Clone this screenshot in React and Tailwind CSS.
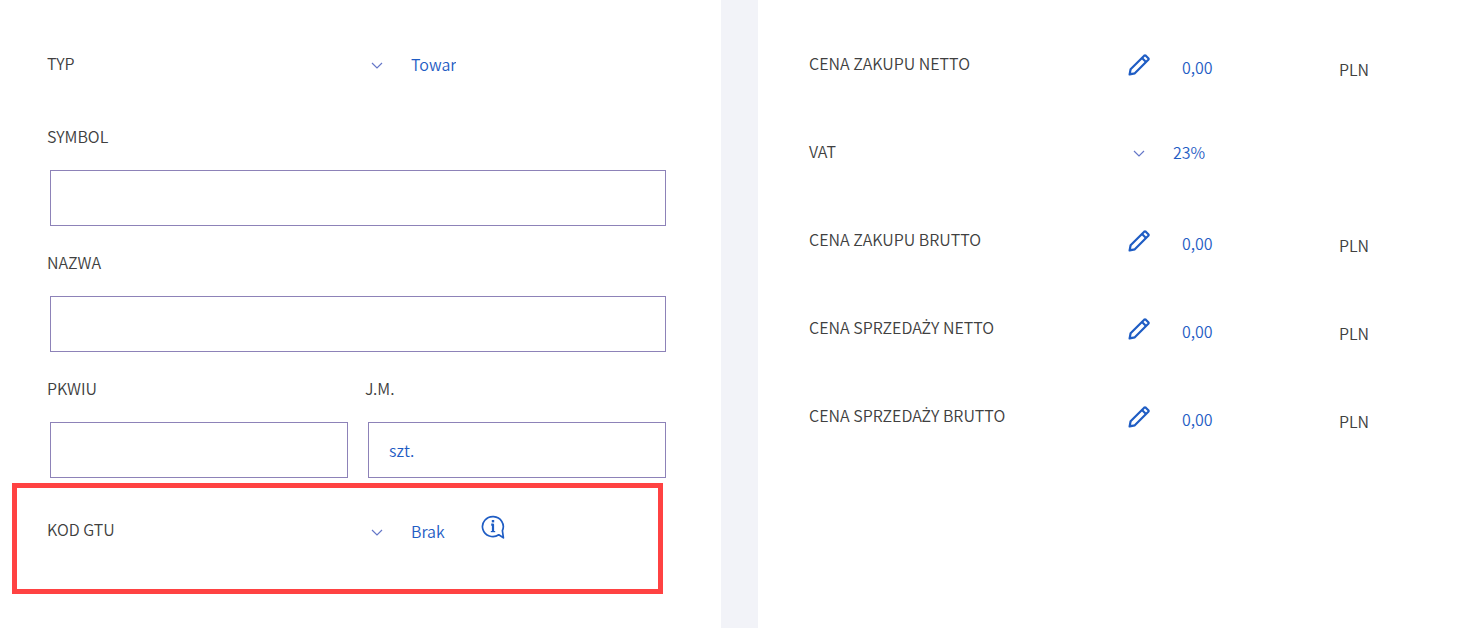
import { useState } from "react";

const prices = [
  { id: "purchaseNet", label: "CENA ZAKUPU NETTO" },
  { id: "vat", label: "VAT" },
  { id: "purchaseGross", label: "CENA ZAKUPU BRUTTO" },
  // the CJK face has no Ż, so that letter takes another font
  { id: "saleNet", label: <>CENA SPRZEDA<span className="font-['Open_Sans'] font-normal">Ż</span>Y NETTO</> },
  { id: "saleGross", label: <>CENA SPRZEDA<span className="font-['Open_Sans'] font-normal">Ż</span>Y BRUTTO</> },
];

function PencilIcon() {
  return (
    <svg viewBox="0 0 22 22" className="w-[22px] h-[22px]" fill="none" stroke="currentColor" strokeWidth="2.2" strokeLinejoin="round">
      <path d="M1.6 20.4 L2.6 15.2 L16.2 1.7 Q17 1 17.8 1.7 L20.3 4.2 Q21 5 20.3 5.8 L6.8 19.3 Z" />
      <path d="M14 4 L18 8" />
      <path d="M1.2 20.8 L2 17.5 L4.5 20 Z" fill="currentColor" stroke="none" />
    </svg>
  );
}

function InfoIcon() {
  return (
    <svg viewBox="0 0 24 24" className="w-6 h-6" fill="none" stroke="currentColor" strokeWidth="1.7" strokeLinejoin="round">
      <path d="M17.8 19.8 A10.4 10 0 1 1 21.4 15.6 L22.4 22.8 Z" />
      <path d="M10.2 9.6 H12 V17" strokeWidth="2.2" />
      <path d="M9.8 16.6 H14.2" strokeWidth="1.2" />
      <rect x="10.8" y="5" width="2.4" height="2.4" fill="currentColor" stroke="none" />
    </svg>
  );
}

function Select({ id, value, options, onChange }) {
  return (
    <div className="relative">
      <svg viewBox="0 0 12 8" className="absolute left-[6px] top-[11px] w-3 h-2 pointer-events-none" fill="none" stroke="#6577c8" strokeWidth="1.2">
        <path d="M1 1 L6 6 L11 1" />
      </svg>
      <select
        id={id}
        value={value}
        onChange={(e) => onChange(e.target.value)}
        className="block h-[26px] pl-[46px] pr-2 field-sizing-content appearance-none bg-transparent text-[#1f5dc4] outline-none cursor-pointer"
      >
        {options.map((o) => (
          <option key={o}>{o}</option>
        ))}
      </select>
    </div>
  );
}

function TextField({ id, label, value, onChange }) {
  return (
    <div>
      <label htmlFor={id} className="block leading-6">
        {label}
      </label>
      <div className="mt-[22px] px-[3px]">
        <input
          id={id}
          type="text"
          value={value}
          onChange={(e) => onChange(e.target.value)}
          className="block w-full h-14 px-5 border border-[#8d82b8] text-[#1f5dc4] outline-none"
        />
      </div>
    </div>
  );
}

function App() {
  const [form, setForm] = useState({
    type: "Towar",
    symbol: "",
    name: "",
    pkwiu: "",
    unit: "szt.",
    gtu: "Brak",
    vat: "23%",
    purchaseNet: "0,00",
    purchaseGross: "0,00",
    saleNet: "0,00",
    saleGross: "0,00",
  });

  const set = (key) => (value) => setForm({ ...form, [key]: value });

  return (
    <form className="min-h-screen grid grid-cols-[721fr_37px_720fr] bg-white font-['Noto_Sans_CJK_JP','Noto_Sans',sans-serif] text-base font-[350] text-[#404040]">
      <section className="pt-[51px] pl-3 pr-[52px] pb-8">
        <div className="pl-[35px]">
          <div className="grid grid-cols-2 gap-x-[14px] mb-[47px]">
            <label htmlFor="type" className="leading-6">TYP</label>
            <Select id="type" value={form.type} options={["Towar", "Usługa"]} onChange={set("type")} />
          </div>

          <div className="flex flex-col gap-6">
            <TextField id="symbol" label="SYMBOL" value={form.symbol} onChange={set("symbol")} />
            <TextField id="name" label="NAZWA" value={form.name} onChange={set("name")} />
            <div className="grid grid-cols-2 gap-x-[14px]">
              <TextField id="pkwiu" label="PKWIU" value={form.pkwiu} onChange={set("pkwiu")} />
              <TextField id="unit" label="J.M." value={form.unit} onChange={set("unit")} />
            </div>
          </div>
        </div>

        <div className="mt-[5px] mr-[6px] h-[111px] pl-[30px] pt-[27px] border-5 border-[#ff4242]">
          <div className="-mr-[11px] grid grid-cols-2 gap-x-[14px]">
            <label htmlFor="gtu" className="pt-[2px] leading-6">KOD GTU</label>
            <div className="flex items-start gap-7">
              <div className="pt-[3px]">
                <Select id="gtu" value={form.gtu} options={["Brak", "GTU_01", "GTU_02"]} onChange={set("gtu")} />
              </div>
              <button type="button" aria-label="Informacja" className="text-[#1f5dc4] cursor-pointer">
                <InfoIcon />
              </button>
            </div>
          </div>
        </div>
      </section>

      <div className="bg-[#f2f3f8]" />

      <section className="pt-[51px] pl-[51px] pr-[47px] pb-8">
        {prices.map(({ id, label }) => (
          <div key={id} className="grid grid-cols-2 gap-x-[14px] h-[88px] items-start">
            <label htmlFor={id} className="leading-6">{label}</label>
            {id === "vat" ? (
              <Select id={id} value={form.vat} options={["23%", "8%", "5%", "0%"]} onChange={set("vat")} />
            ) : (
              <div className="flex items-start">
                <button type="button" aria-label="Edytuj" className="mt-[3px] px-px text-[#1f5dc4] cursor-pointer">
                  <PencilIcon />
                </button>
                <input
                  id={id}
                  type="text"
                  value={form[id]}
                  onChange={(e) => set(id)(e.target.value)}
                  className="ml-[31px] mt-1 w-[157px] h-6 text-[#1f5dc4] outline-none"
                />
                <span className="mt-[6px] leading-6">PLN</span>
              </div>
            )}
          </div>
        ))}
      </section>
    </form>
  );
}

export default App;
